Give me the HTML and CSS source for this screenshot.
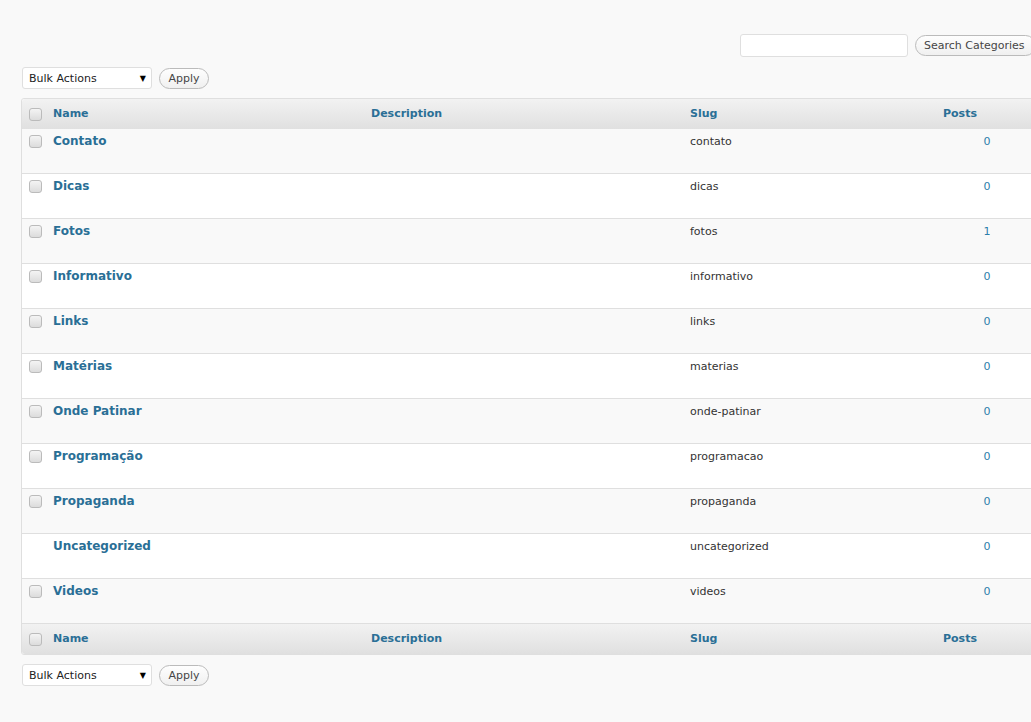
FILE: index.html
```html
<!DOCTYPE html>
<html>
<head>
<meta charset="utf-8">
<title>Categories</title>
<link rel="stylesheet" href="styles.css">
</head>
<body>
<div class="wrap">
  <div class="search-box">
    <input class="search-input" type="text">
    <button class="btn search-btn">Search Categories</button>
  </div>
  <div class="tablenav top">
    <div class="select"><span>Bulk Actions</span><span class="arrow">▼</span></div>
    <button class="btn apply">Apply</button>
  </div>
  <table class="list">
    <colgroup>
      <col class="c-cb"><col class="c-name"><col class="c-desc"><col class="c-slug"><col class="c-posts">
    </colgroup>
    <thead>
      <tr><th class="cb"><span class="check"></span></th><th>Name</th><th>Description</th><th>Slug</th><th>Posts</th></tr>
    </thead>
    <tbody>
      <tr class="alt"><td class="cb"><span class="check"></span></td><td class="name">Contato</td><td></td><td class="slug">contato</td><td class="posts"><span class="count">0</span></td></tr>
      <tr><td class="cb"><span class="check"></span></td><td class="name">Dicas</td><td></td><td class="slug">dicas</td><td class="posts"><span class="count">0</span></td></tr>
      <tr class="alt"><td class="cb"><span class="check"></span></td><td class="name">Fotos</td><td></td><td class="slug">fotos</td><td class="posts"><span class="count">1</span></td></tr>
      <tr><td class="cb"><span class="check"></span></td><td class="name">Informativo</td><td></td><td class="slug">informativo</td><td class="posts"><span class="count">0</span></td></tr>
      <tr class="alt"><td class="cb"><span class="check"></span></td><td class="name">Links</td><td></td><td class="slug">links</td><td class="posts"><span class="count">0</span></td></tr>
      <tr><td class="cb"><span class="check"></span></td><td class="name">Matérias</td><td></td><td class="slug">materias</td><td class="posts"><span class="count">0</span></td></tr>
      <tr class="alt"><td class="cb"><span class="check"></span></td><td class="name">Onde Patinar</td><td></td><td class="slug">onde-patinar</td><td class="posts"><span class="count">0</span></td></tr>
      <tr><td class="cb"><span class="check"></span></td><td class="name">Programação</td><td></td><td class="slug">programacao</td><td class="posts"><span class="count">0</span></td></tr>
      <tr class="alt"><td class="cb"><span class="check"></span></td><td class="name">Propaganda</td><td></td><td class="slug">propaganda</td><td class="posts"><span class="count">0</span></td></tr>
      <tr><td class="cb"></td><td class="name">Uncategorized</td><td></td><td class="slug">uncategorized</td><td class="posts"><span class="count">0</span></td></tr>
      <tr class="alt"><td class="cb"><span class="check"></span></td><td class="name">Videos</td><td></td><td class="slug">videos</td><td class="posts"><span class="count">0</span></td></tr>
    </tbody>
    <tfoot>
      <tr><th class="cb"><span class="check"></span></th><th>Name</th><th>Description</th><th>Slug</th><th>Posts</th></tr>
    </tfoot>
  </table>
  <div class="tablenav bottom">
    <div class="select"><span>Bulk Actions</span><span class="arrow">▼</span></div>
    <button class="btn apply">Apply</button>
  </div>
</div>
</body>
</html>
```
FILE: styles.css
```css
html, body {
  margin: 0;
  padding: 0;
  background: #f9f9f9;
  overflow: hidden;
}
body {
  font-family: "DejaVu Sans", Verdana, sans-serif;
  font-size: 11px;
  color: #333;
}
.wrap {
  margin-left: 21px;
  width: 1015px;
}
.search-box {
  display: flex;
  justify-content: flex-end;
  align-items: center;
  gap: 7px;
  padding-top: 34px;
}
.search-input {
  box-sizing: border-box;
  width: 168px;
  height: 23px;
  border: 1px solid #dfdfdf;
  border-radius: 3px;
  background: #fff;
  margin: 0;
}
.btn {
  box-sizing: border-box;
  font-family: "DejaVu Sans", Verdana, sans-serif;
  font-size: 11px;
  color: #464646;
  border: 1px solid #bbb;
  border-radius: 11px;
  background: linear-gradient(#fefefe, #f0f0f0);
  height: 21px;
  line-height: 19px;
  padding: 0 8px;
  margin: 0;
  white-space: nowrap;
}
.search-btn {
  width: 121px;
  text-align: left;
}
.tablenav {
  display: flex;
  align-items: center;
  gap: 7px;
}
.tablenav.top {
  margin-top: 10px;
  height: 22px;
  margin-bottom: 9px;
}
.tablenav.bottom {
  margin-top: 9px;
  height: 22px;
}
.select {
  box-sizing: border-box;
  width: 130px;
  height: 22px;
  margin-left: 1px;
  border: 1px solid #dfdfdf;
  border-radius: 3px;
  background: #fff;
  display: flex;
  align-items: center;
  justify-content: space-between;
  padding: 1px 5px 0 6px;
  color: #222;
}
.select .arrow {
  font-size: 8px;
  color: #000;
}
.apply {
  width: 50px;
  padding: 0;
  text-align: center;
}
.list {
  width: 1015px;
  table-layout: fixed;
  border-collapse: separate;
  border-spacing: 0;
  border: 1px solid #dfdfdf;
  border-radius: 3px;
  background: #fff;
}
.c-cb { width: 24px; }
.c-name { width: 318px; }
.c-desc { width: 319px; }
.c-slug { width: 253px; }
.c-posts { width: 100px; }
.list th {
  height: 30px;
  box-sizing: border-box;
  padding: 0 7px 2px;
  text-align: left;
  font-weight: bold;
  font-size: 11px;
  color: #2a6f96;
  vertical-align: middle;
  background: linear-gradient(#f2f2f2, #e0e0e0);
}
.list th.cb { padding-bottom: 0; }
.list thead th:first-child { border-top-left-radius: 3px; }
.list tfoot th:first-child { border-bottom-left-radius: 3px; }
.list td {
  height: 45px;
  box-sizing: border-box;
  padding: 5px 7px 0;
  vertical-align: top;
  border-bottom: 1px solid #dfdfdf;
}
.list tr.alt td { background: #f9f9f9; }
.list th.cb, .list td.cb {
  padding-left: 7px;
  padding-right: 0;
}
.list td.cb { padding-top: 6px; }
.check {
  display: block;
  box-sizing: border-box;
  width: 13px;
  height: 13px;
  border: 1px solid #bbb;
  border-radius: 3px;
  background: linear-gradient(#f4f4f4, #dcdcdc);
}
.name {
  font-size: 12px;
  font-weight: bold;
  color: #2a6f96;
  line-height: 14px;
}
.slug {
  padding-top: 6px !important;
  line-height: 13px;
}
.list td.posts {
  text-align: center;
  padding-top: 6px;
  padding-left: 9px;
  line-height: 13px;
}
.count {
  color: #2b7fab;
}
```
